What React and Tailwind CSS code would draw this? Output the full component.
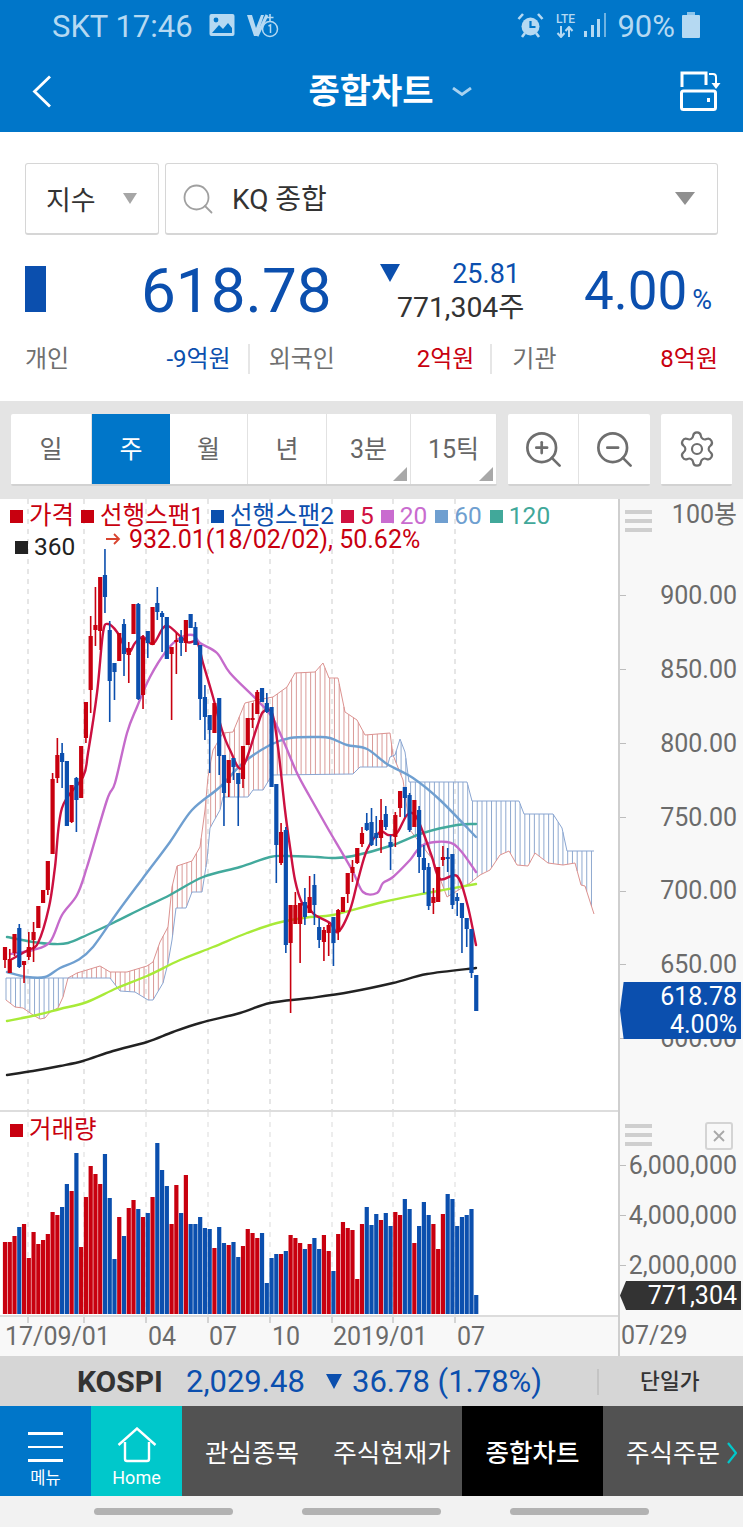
import React from "react";
import { Search, ZoomIn, ZoomOut, Settings } from "lucide-react";

const RED = "#c8000f";
const BLUE = "#0b4fae";

// x of the n-th weekly bar, same for candles and volume
const barX = (i) => 5 + 4.76 * i;

// [up, wickTop, bodyTop, bodyBottom, wickBottom], page y coordinates
const candles = [
  [1, 947, 947, 960, 968], [1, 949, 959, 973, 973], [1, 934, 934, 953, 956], [0, 924, 928, 967, 968],
  [1, 961, 961, 965, 983], [1, 932, 947, 957, 960], [1, 922, 932, 940, 962], [1, 906, 906, 928, 928],
  [1, 890, 890, 903, 903], [1, 861, 861, 890, 895], [1, 773, 779, 854, 854], [1, 738, 755, 778, 783],
  [0, 743, 753, 762, 788], [0, 761, 761, 826, 826], [1, 785, 785, 822, 823], [0, 777, 778, 800, 832],
  [1, 746, 746, 798, 798], [1, 702, 702, 738, 743], [1, 616, 636, 690, 713], [1, 587, 625, 630, 646],
  [1, 577, 577, 631, 650], [0, 549, 575, 597, 613], [0, 621, 630, 681, 722], [0, 663, 663, 672, 700],
  [1, 633, 633, 661, 661], [0, 619, 624, 654, 676], [1, 642, 648, 655, 683], [1, 604, 604, 634, 634],
  [0, 603, 604, 699, 700], [1, 635, 638, 695, 709], [0, 631, 631, 643, 658], [1, 607, 607, 645, 645],
  [0, 587, 603, 612, 620], [0, 611, 613, 617, 652], [0, 617, 617, 659, 659], [1, 647, 647, 654, 720],
  [1, 633, 640, 642, 674], [0, 630, 637, 643, 656], [1, 620, 620, 643, 652], [0, 614, 614, 628, 628],
  [0, 622, 627, 645, 645], [0, 645, 645, 699, 720], [0, 685, 697, 717, 740], [0, 715, 715, 730, 773],
  [1, 703, 703, 733, 733], [0, 698, 698, 756, 775], [0, 755, 755, 793, 826], [1, 760, 760, 783, 797],
  [0, 758, 758, 767, 780], [0, 773, 773, 784, 826], [1, 746, 746, 779, 788], [1, 718, 718, 745, 745],
  [1, 703, 718, 720, 728], [1, 690, 692, 714, 714], [0, 688, 688, 702, 702], [0, 693, 703, 712, 713],
  [0, 707, 707, 787, 787], [0, 784, 784, 845, 883], [1, 823, 832, 863, 865], [0, 827, 830, 945, 953],
  [1, 905, 905, 943, 1013], [1, 892, 905, 924, 924], [1, 903, 903, 924, 963], [0, 888, 902, 917, 925],
  [1, 876, 897, 913, 913], [0, 874, 885, 905, 925], [0, 918, 927, 940, 948], [1, 927, 930, 942, 961],
  [1, 923, 925, 933, 956], [0, 917, 917, 943, 966], [1, 909, 910, 932, 940], [1, 897, 897, 912, 912],
  [1, 873, 873, 894, 903], [1, 860, 867, 873, 882], [1, 848, 848, 863, 864], [1, 827, 833, 844, 847],
  [0, 813, 823, 830, 831], [0, 808, 822, 845, 846], [0, 816, 833, 838, 846], [1, 799, 820, 838, 853],
  [0, 806, 814, 827, 830], [0, 835, 842, 847, 870], [1, 812, 815, 837, 847], [1, 791, 791, 808, 817],
  [0, 787, 787, 798, 817], [0, 793, 795, 830, 832], [1, 800, 800, 827, 827], [0, 806, 810, 857, 873],
  [0, 845, 858, 870, 893], [0, 863, 867, 906, 910], [1, 888, 897, 903, 914], [1, 867, 867, 902, 902],
  [1, 846, 857, 860, 866], [0, 848, 857, 859, 872], [0, 854, 854, 905, 909], [0, 893, 897, 901, 916],
  [0, 903, 903, 918, 953], [0, 918, 918, 929, 947], [0, 929, 929, 973, 978], [0, 975, 975, 1011, 1011],
];

// [up, top of bar] in page y
const volume = [
  [1, 1242], [1, 1242], [1, 1236], [0, 1227], [1, 1224], [1, 1258], [1, 1232], [1, 1244], [1, 1240], [1, 1234],
  [1, 1212], [1, 1215], [0, 1207], [0, 1184], [1, 1191], [0, 1153], [1, 1247], [1, 1197], [1, 1166], [1, 1174],
  [1, 1184], [0, 1154], [0, 1198], [0, 1259], [1, 1217], [0, 1236], [1, 1208], [1, 1200], [0, 1209], [1, 1217],
  [0, 1213], [1, 1197], [0, 1143], [0, 1170], [0, 1186], [1, 1224], [1, 1185], [0, 1213], [1, 1175], [0, 1224],
  [0, 1224], [0, 1217], [0, 1228], [0, 1229], [1, 1248], [0, 1227], [0, 1243], [1, 1245], [0, 1242], [0, 1257],
  [1, 1246], [1, 1229], [1, 1233], [1, 1238], [0, 1233], [0, 1283], [0, 1258], [0, 1254], [1, 1254], [0, 1251],
  [1, 1235], [1, 1238], [1, 1243], [0, 1249], [1, 1244], [0, 1238], [0, 1249], [1, 1235], [1, 1251], [0, 1271],
  [1, 1234], [1, 1222], [1, 1228], [1, 1230], [1, 1279], [1, 1224], [0, 1207], [0, 1225], [0, 1214], [1, 1220],
  [0, 1213], [0, 1226], [1, 1212], [1, 1215], [0, 1199], [0, 1209], [1, 1243], [0, 1226], [0, 1202], [0, 1215],
  [1, 1224], [1, 1249], [1, 1214], [0, 1194], [0, 1199], [0, 1226], [0, 1217], [0, 1215], [0, 1209], [0, 1295],
];

const ma5 = [[12, 959], [28, 950], [38, 943], [49, 907], [55, 867], [62, 808], [83, 777], [88, 753], [97, 693], [103, 633], [108, 624], [117, 632], [128, 652], [135, 643], [143, 637], [153, 644], [163, 628], [170, 627], [187, 642], [197, 642], [203, 663], [213, 697], [222, 730], [230, 750], [242, 768], [257, 727], [263, 712], [272, 713], [278, 747], [285, 810], [290, 847], [295, 880], [302, 903], [308, 907], [315, 915], [330, 923], [338, 932], [350, 910], [358, 880], [367, 850], [380, 832], [388, 835], [397, 833], [407, 815], [415, 815], [423, 832], [432, 857], [440, 879], [457, 876], [467, 903], [476, 945]];
const ma20 = [[10, 954], [33, 950], [50, 942], [62, 915], [77, 895], [87, 867], [107, 800], [115, 783], [127, 733], [137, 707], [150, 677], [167, 650], [180, 638], [193, 635], [200, 643], [217, 653], [230, 673], [257, 700], [272, 717], [283, 740], [297, 773], [310, 797], [327, 827], [352, 870], [363, 892], [377, 893], [383, 883], [393, 877], [410, 860], [423, 845], [447, 842], [460, 850], [476, 872]];
const ma60 = [[7, 972], [27, 977], [45, 977], [60, 968], [78, 960], [93, 947], [117, 913], [143, 878], [170, 842], [192, 810], [220, 787], [243, 763], [270, 745], [290, 738], [317, 737], [330, 738], [347, 745], [367, 749], [387, 764], [413, 778], [440, 800], [476, 837]];
const ma120 = [[7, 937], [33, 942], [53, 944], [68, 943], [87, 935], [113, 923], [143, 908], [170, 895], [203, 877], [240, 867], [270, 857], [287, 856], [317, 857], [333, 858], [353, 856], [390, 846], [423, 833], [457, 825], [476, 824]];
const ma240 = [[7, 1021], [37, 1015], [60, 1009], [87, 1002], [117, 988], [147, 976], [180, 960], [213, 947], [247, 933], [277, 923], [310, 917], [333, 915], [383, 902], [427, 893], [476, 884]];
const ma360 = [[7, 1075], [33, 1071], [60, 1066], [83, 1061], [113, 1051], [147, 1042], [173, 1032], [200, 1023], [240, 1013], [270, 1003], [310, 998], [350, 992], [393, 983], [427, 974], [476, 968]];

const spanA = [[6, 1000], [15, 1007], [23, 1008], [33, 1015], [40, 1019], [45, 1018], [50, 1012], [58, 1008], [63, 997], [68, 978], [77, 973], [100, 966], [110, 972], [127, 972], [147, 966], [153, 962], [160, 942], [168, 927], [172, 887], [177, 866], [192, 861], [200, 847], [205, 810], [208, 777], [213, 750], [223, 733], [233, 732], [245, 703], [257, 700], [273, 697], [287, 687], [295, 673], [315, 672], [323, 663], [329, 678], [338, 678], [345, 712], [357, 720], [365, 735], [390, 733], [393, 755], [403, 780], [410, 830], [433, 860], [447, 897], [470, 883], [480, 875], [490, 870], [500, 855], [509, 851], [517, 865], [528, 866], [535, 853], [548, 863], [563, 865], [575, 863], [581, 885], [585, 886], [594, 914]];
const spanB = [[6, 978], [110, 978], [120, 991], [135, 992], [148, 1000], [153, 1000], [163, 983], [168, 963], [172, 940], [176, 908], [186, 908], [192, 892], [202, 892], [207, 860], [210, 828], [220, 810], [223, 797], [248, 797], [253, 790], [263, 790], [272, 775], [353, 774], [360, 767], [387, 767], [390, 757], [395, 755], [400, 739], [405, 752], [409, 782], [467, 782], [472, 801], [519, 801], [524, 814], [553, 814], [562, 828], [567, 851], [594, 851]];

const gridX = [28, 84, 146, 208, 270, 332, 393, 455];

const toPath = (pts) => "M" + pts.map((p) => p.join(" ")).join("L");

// catmull-rom through the points so the moving averages don't look angular
const smooth = (pts) => {
  let d = `M${pts[0][0]} ${pts[0][1]}`;
  for (let i = 0; i < pts.length - 1; i++) {
    const p0 = pts[i - 1] || pts[i];
    const p1 = pts[i];
    const p2 = pts[i + 1];
    const p3 = pts[i + 2] || p2;
    const c1x = p1[0] + (p2[0] - p0[0]) / 6;
    const c1y = p1[1] + (p2[1] - p0[1]) / 6;
    const c2x = p2[0] - (p3[0] - p1[0]) / 6;
    const c2y = p2[1] - (p3[1] - p1[1]) / 6;
    d += `C${c1x} ${c1y} ${c2x} ${c2y} ${p2[0]} ${p2[1]}`;
  }
  return d;
};

const yAt = (pts, x) => {
  for (let i = 1; i < pts.length; i++) {
    if (x <= pts[i][0]) {
      const [x0, y0] = pts[i - 1];
      const [x1, y1] = pts[i];
      return y0 + ((y1 - y0) * (x - x0)) / (x1 - x0);
    }
  }
  return pts[pts.length - 1][1];
};

const hatchX = Array.from({ length: 125 }, (_, i) => 6 + 4.76 * i).filter((x) => x <= 594);

const PriceChart = () => (
  <svg viewBox="0 499 618 611" className="block w-[618px] h-[611px]">
    {gridX.map((x) => (
      <line key={x} x1={x} x2={x} y1="499" y2="1110" stroke="#dedede" strokeWidth="1.5" strokeDasharray="5 5" />
    ))}
    {hatchX.map((x) => {
      const a = yAt(spanA, x);
      const b = yAt(spanB, x);
      return <line key={x} x1={x} x2={x} y1={a} y2={b} stroke={a < b ? "#d99a98" : "#8fa9cf"} strokeWidth="1" />;
    })}
    <path d={toPath(spanA)} fill="none" stroke="#dc9290" strokeWidth="1" />
    <path d={toPath(spanB)} fill="none" stroke="#8aa6d2" strokeWidth="1" />
    <g fill="none" strokeWidth="2.4" strokeLinejoin="round" strokeLinecap="round">
      <path d={smooth(ma360)} stroke="#222222" />
      <path d={smooth(ma240)} stroke="#a8ea38" />
      <path d={smooth(ma120)} stroke="#42a99c" />
      <path d={smooth(ma60)} stroke="#6f9fd0" />
      <path d={smooth(ma20)} stroke="#c56bcb" />
      <path d={smooth(ma5)} stroke="#cc1040" />
    </g>
    {candles.map(([up, wt, bt, bb, wb], i) => {
      const x = barX(i);
      const c = up ? RED : BLUE;
      return (
        <g key={i}>
          <line x1={x} x2={x} y1={wt} y2={wb} stroke={c} strokeWidth="1.6" />
          <rect x={x - 2.1} y={bt} width="4.2" height={Math.max(bb - bt, 1.5)} fill={c} />
        </g>
      );
    })}
  </svg>
);

const VolumeChart = () => (
  <svg viewBox="0 1112 618 203" className="block w-[618px] h-[203px]">
    {gridX.map((x) => (
      <line key={x} x1={x} x2={x} y1="1112" y2="1315" stroke="#e2e2e2" strokeWidth="1.2" strokeDasharray="5 5" />
    ))}
    {volume.map(([up, top], i) => (
      <rect key={i} x={barX(i) - 2.1} y={top} width="4.2" height={1314 - top} fill={up ? RED : BLUE} />
    ))}
  </svg>
);

const Legend = ({ color, label }) => (
  <span className="flex items-center gap-[6px]">
    <span className="w-[13px] h-[13px]" style={{ background: color }} />
    <span style={{ color }}>{label}</span>
  </span>
);

const Burger = () => (
  <div className="flex flex-col gap-[5px] w-[27px]">
    <div className="h-[4px] bg-[#cfcfcf]" />
    <div className="h-[4px] bg-[#cfcfcf]" />
    <div className="h-[4px] bg-[#cfcfcf]" />
  </div>
);

const PriceTick = ({ value }) => (
  <div className="h-[73.8px] flex items-center justify-between pr-[6px]">
    <div className="w-[6px] h-px bg-[#bdbdbd]" />
    <span>{value}</span>
  </div>
);

const VolumeTick = ({ value }) => (
  <div className="h-[50px] flex items-center justify-between pr-[6px]">
    <div className="w-[6px] h-px bg-[#bdbdbd]" />
    <span>{value}</span>
  </div>
);

const StatusBar = () => (
  <div className="h-[50px] flex items-center justify-between pl-[52px] pr-[43px] text-[#b5d9f2] text-[31px] leading-none">
    <div className="flex items-center">
      <span className="mt-[2px]">SKT 17:46</span>
      <svg width="26" height="24" viewBox="0 0 26 24" className="ml-[16px]">
        <rect x="0.5" y="1" width="25" height="22" rx="2" fill="#b5d9f2" />
        <circle cx="7" cy="7" r="2.4" fill="#0076c9" />
        <path d="M3 20l7-8 4 4 5-6 4 5v5z" fill="#0076c9" />
      </svg>
      <svg width="33" height="26" viewBox="0 0 33 26" className="ml-[11px]">
        <path d="M1 3h5l4 13L15 3h3l-7 21H8z" fill="#b5d9f2" />
        <path d="M11 24L21 3" stroke="#b5d9f2" strokeWidth="3" />
        <path d="M24 2v7M20.500 5.500h7" stroke="#b5d9f2" strokeWidth="1.6" />
        <circle cx="24" cy="17" r="7.500" fill="#0076c9" stroke="#b5d9f2" strokeWidth="1.500" />
        <path d="M22.500 14l2-1v8" fill="none" stroke="#b5d9f2" strokeWidth="1.500" />
      </svg>
    </div>
    <div className="flex items-center">
      <svg width="27" height="27" viewBox="0 0 27 27">
        <circle cx="13.500" cy="14.500" r="9" fill="#b5d9f2" />
        <path d="M13.500 9v6h5" fill="none" stroke="#0076c9" strokeWidth="2.200" />
        <path d="M1.500 7L6 2M25.500 7L21 2M5 25l3-4M22 25l-3-4" stroke="#b5d9f2" strokeWidth="2.600" />
      </svg>
      <div className="ml-[9px] w-[24px] flex flex-col items-center">
        <span className="text-[12px] leading-[13px] font-medium">LTE</span>
        <svg width="20" height="12" viewBox="0 0 20 12">
          <path d="M6 0v10M2.500 7L6 11l3.500-4M14 11V1M10.500 5L14 1l3.500 4" fill="none" stroke="#b5d9f2" strokeWidth="2" />
        </svg>
      </div>
      <svg width="23" height="24" viewBox="0 0 23 24" className="ml-[7px]">
        <rect x="0" y="18" width="3" height="6" fill="#b5d9f2" />
        <rect x="7" y="12" width="3" height="12" fill="#b5d9f2" />
        <rect x="13" y="6" width="3" height="18" fill="#b5d9f2" />
        <rect x="20" y="0" width="2" height="24" fill="#6fb3e2" />
      </svg>
      <span className="ml-[10px] mt-[2px]">90%</span>
      <svg width="18" height="26" viewBox="0 0 18 26" className="ml-[7px]">
        <rect x="5" y="0" width="8" height="3" fill="#8cc4ea" />
        <rect x="0" y="3" width="18" height="23" rx="1" fill="#b5d9f2" />
      </svg>
    </div>
  </div>
);

const TitleBar = () => (
  <div className="h-[82px] flex items-center justify-between pl-[32px] pr-[22px]">
    <svg width="20" height="33" viewBox="0 0 20 33">
      <path d="M18 1.500L2.500 16.500 18 31.500" fill="none" stroke="#ffffff" strokeWidth="2.800" />
    </svg>
    <div className="flex items-center ml-[48px]">
      <span className="text-white text-[34px] font-bold leading-none">종합차트</span>
      <svg width="20" height="9" viewBox="0 0 20 9" className="ml-[18px]">
        <path d="M1 1l9 6.500L19 1" fill="none" stroke="#a8d2f0" strokeWidth="2.800" />
      </svg>
    </div>
    <svg width="41" height="40" viewBox="0 0 41 40">
      <path d="M2 16V2h24v12" fill="none" stroke="#ffffff" strokeWidth="3" />
      <path d="M29 3h4a3 3 0 0 1 3 3v7" fill="none" stroke="#ffffff" strokeWidth="2" />
      <path d="M31.500 12h9L36 18z" fill="#ffffff" />
      <rect x="1.500" y="20" width="34" height="18.500" rx="2" fill="none" stroke="#ffffff" strokeWidth="3" />
      <rect x="27" y="27" width="3" height="4" fill="#ffffff" />
    </svg>
  </div>
);

const SymbolRow = () => (
  <div className="flex gap-[6px] h-[72px] px-[25px]">
    <div className="w-[134px] flex items-center border border-[#d6d6d6] border-b-2 rounded-[3px] pl-[20px]">
      <span className="text-[27px] text-[#333333] pt-[6px]">지수</span>
      <div className="ml-[27px] w-0 h-0 border-x-[7px] border-x-transparent border-t-[11px] border-t-[#a6a6a6]" />
    </div>
    <div className="flex-1 flex items-center border border-[#d6d6d6] border-b-2 rounded-[3px] pl-[14px] pr-[22px]">
      <Search size={36} strokeWidth={1.2} color="#a0a0a0" />
      <span className="ml-[16px] text-[28px] text-[#333333] pt-[3px]">KQ 종합</span>
      <div className="ml-auto w-0 h-0 border-x-[10px] border-x-transparent border-t-[13px] border-t-[#8f8f8f]" />
    </div>
  </div>
);

const PriceRow = () => (
  <div className="flex items-center h-[60px] mt-[26px] px-[25px] text-[#0b4fae]">
    <div className="w-[21px] h-[46px] bg-[#0b4fae] self-start mt-[5px]" />
    <span className="ml-[95px] w-[239px] text-[62px] leading-none">618.78</span>
    <div className="w-0 h-0 self-start mt-[3px] border-x-[10px] border-x-transparent border-t-[18px] border-t-[#0b4fae]" />
    <div className="-ml-[3px] w-[127px] shrink-0 text-right text-[28.4px] leading-[33px] whitespace-nowrap">
      <div className="pr-[4px] text-[27px]">25.81</div>
      <div className="text-[#333333]">771,304주</div>
    </div>
    <div className="ml-[60px] flex items-baseline">
      <span className="text-[53px] leading-none">4.00</span>
      <span className="ml-[5px] text-[27px] leading-none">%</span>
    </div>
  </div>
);

const InvestorCell = ({ name, value, color }) => (
  <div className="w-[206px] flex justify-between">
    <span className="text-[#707070]">{name}</span>
    <span style={{ color }}>{value}</span>
  </div>
);

const InvestorRow = () => (
  <div className="flex items-center h-[30px] mt-[23px] px-[25px] text-[24px] leading-none">
    <InvestorCell name="개인" value="-9억원" color={BLUE} />
    <div className="w-[2px] h-[30px] bg-[#e6e6e6] ml-[17px] mr-[19px]" />
    <InvestorCell name="외국인" value="2억원" color={RED} />
    <div className="w-[2px] h-[30px] bg-[#e6e6e6] ml-[16px] mr-[20px]" />
    <InvestorCell name="기관" value="8억원" color={RED} />
  </div>
);

const Corner = () => (
  <div className="absolute right-[3px] bottom-[3px] w-0 h-0 border-l-[14px] border-l-transparent border-b-[14px] border-b-[#a8a8a8]" />
);

const PeriodButton = ({ label, width, active, corner }) => (
  <div
    className={
      active
        ? "relative h-full flex items-center justify-center pt-[2px] bg-[#0076c9] text-white"
        : "relative h-full flex items-center justify-center pt-[2px] border-r border-[#e2e2e2] text-[#666666]"
    }
    style={{ width }}
  >
    {label}
    {corner && <Corner />}
  </div>
);

const Toolbar = () => (
  <div className="h-[98px] bg-[#e4e4e4] pt-[13px] pl-[11px] flex text-[25px]">
    <div className="flex h-[72px] w-[486px] bg-white border-b-2 border-[#d2d2d2] rounded-[2px]">
      <PeriodButton label="일" width="81px" />
      <PeriodButton label="주" width="78px" active />
      <PeriodButton label="월" width="78px" />
      <PeriodButton label="년" width="79px" />
      <PeriodButton label="3분" width="84px" corner />
      <PeriodButton label="15틱" width="86px" corner />
    </div>
    <div className="flex h-[72px] w-[142px] ml-[11px] bg-white border-b-2 border-[#d2d2d2] rounded-[2px]">
      <div className="w-[71px] flex items-center justify-center border-r border-[#e2e2e2]">
        <ZoomIn size={43} strokeWidth={1.5} color="#6e6e6e" />
      </div>
      <div className="w-[71px] flex items-center justify-center">
        <ZoomOut size={43} strokeWidth={1.5} color="#6e6e6e" />
      </div>
    </div>
    <div className="flex items-center justify-center h-[72px] w-[71px] ml-[11px] bg-white border-b-2 border-[#d2d2d2] rounded-[2px]">
      <Settings size={40} strokeWidth={1.3} color="#6e6e6e" />
    </div>
  </div>
);

const ChartArea = () => (
  <div className="flex h-[857px] bg-[#f8f8f8] text-[25px] text-[#6b6b6b]">
    <div className="w-[618px]">
      <div className="relative h-[611px] bg-white">
        <PriceChart />
        <div className="absolute left-[10px] top-0 text-[24.5px] leading-none">
          <div className="flex items-center gap-[7px] h-[34px] whitespace-nowrap">
            <Legend color={RED} label="가격" />
            <Legend color={RED} label="선행스팬1" />
            <Legend color={BLUE} label="선행스팬2" />
            <Legend color="#d0103f" label="5" />
            <Legend color="#c96ccf" label="20" />
            <span className="ml-[1px]">
              <Legend color="#6f9fd0" label="60" />
            </span>
            <span className="ml-[1px]">
              <Legend color="#41a89a" label="120" />
            </span>
          </div>
          <div className="flex h-[34px]">
            <div className="ml-[5px] w-[90px] pt-[2px]">
              <Legend color="#222222" label="360" />
            </div>
            <span className="flex items-center h-[24px] -mt-[6px] text-[#c8000f] text-[25px] whitespace-nowrap">
              <svg width="16" height="14" viewBox="0 0 16 14">
                <path d="M1 7h13M9 2l5 5-5 5" fill="none" stroke="#d8442f" strokeWidth="1.800" />
              </svg>
              <span className="ml-[8px]">932.01(18/02/02), 50.62%</span>
            </span>
          </div>
        </div>
      </div>
      <div className="h-[2px] bg-[#dddddd]" />
      <div className="relative h-[203px] bg-white">
        <VolumeChart />
        <div className="absolute left-[10px] top-[6px] text-[24.5px] leading-none">
          <Legend color={RED} label="거래량" />
        </div>
      </div>
      <div className="h-[2px] bg-[#dcdcdc]" />
      <svg viewBox="0 0 618 6" className="block w-[618px] h-[6px]">
        {gridX.map((x) => (
          <line key={x} x1={x} x2={x} y1="0" y2="6" stroke="#bdbdbd" strokeWidth="1.200" />
        ))}
      </svg>
      <div className="flex items-center h-[26px] leading-none">
        <span className="w-[148px] pl-[5px]">17/09/01</span>
        <span className="w-[61px]">04</span>
        <span className="w-[63px]">07</span>
        <span className="w-[61px]">10</span>
        <span className="w-[124px]">2019/01</span>
        <span>07</span>
      </div>
    </div>
    <div className="relative w-[125px] border-l-2 border-[#cfcfcf]">
      <div className="h-[60px] flex items-start justify-between pl-[5px] pr-[6px]">
        <div className="mt-[11px]">
          <Burger />
        </div>
        <span className="leading-[31px]">100봉</span>
      </div>
      <PriceTick value="900.00" />
      <PriceTick value="850.00" />
      <PriceTick value="800.00" />
      <PriceTick value="750.00" />
      <PriceTick value="700.00" />
      <PriceTick value="650.00" />
      <PriceTick value="600.00" />
      <div className="absolute right-[2px] top-[483px] w-[121px] h-[57px] bg-[#0b4fae] text-white text-right pr-[4px] pt-[1px] leading-[28px] [clip-path:polygon(3%_0,100%_0,100%_100%,3%_100%,0_50%)]">
        <div>618.78</div>
        <div>4.00%</div>
      </div>
      <div className="mt-[36.400px] h-[29px] flex items-start justify-between pl-[5px] pr-[10px] pt-[10px]">
        <div className="mt-[2px]">
          <Burger />
        </div>
        <div className="w-[28px] h-[28px] border-2 border-[#d4d4d4] rounded-[3px] flex items-center justify-center">
          <svg width="12" height="12" viewBox="0 0 12 12">
            <path d="M1 1l10 10M11 1L1 11" stroke="#a8a8a8" strokeWidth="1.800" />
          </svg>
        </div>
      </div>
      <VolumeTick value="6,000,000" />
      <VolumeTick value="4,000,000" />
      <VolumeTick value="2,000,000" />
      <div className="absolute right-[2px] top-[782px] w-[121px] h-[29px] bg-[#333333] text-white text-right pr-[4px] leading-[29px] [clip-path:polygon(5%_0,100%_0,100%_100%,5%_100%,0_50%)]">
        771,304
      </div>
      <div className="mt-[25px] pl-[1px] h-[40px] flex items-center leading-none">07/29</div>
    </div>
  </div>
);

const KospiBar = () => (
  <div className="h-[50px] bg-[#d6d6d6] flex items-center pt-[1px] text-[#0b4fae] text-[31px] leading-none">
    <span className="ml-[77px] w-[109px] font-bold text-[#333333] text-[30px]">KOSPI</span>
    <span className="w-[140px]">2,029.48</span>
    <div className="w-0 h-0 border-x-[8.500px] border-x-transparent border-t-[15px] border-t-[#0b4fae]" />
    <span className="ml-[10px]">36.78 (1.78%)</span>
    <div className="ml-[55px] w-[2px] h-[26px] bg-[#c4c4c4]" />
    <span className="ml-[41px] text-[21.500px] font-medium text-[#333333]">단일가</span>
  </div>
);

const NavBar = () => (
  <div className="h-[90px] flex bg-[#525252] text-white text-[25.500px]">
    <div className="w-[91px] bg-[#0076c9] flex flex-col items-center pt-[26px]">
      <div className="w-[35px] h-[2.500px] bg-white" />
      <div className="w-[35px] h-[2.500px] bg-white mt-[11px]" />
      <div className="w-[35px] h-[2.500px] bg-white mt-[11px]" />
      <span className="mt-[8px] text-[16.500px] leading-[18px]">메뉴</span>
    </div>
    <div className="w-[91px] bg-[#00c8cb] flex flex-col items-center pt-[21px]">
      <svg width="40" height="36" viewBox="0 0 40 36">
        <path d="M1.500 18L20 1.500 38.500 18M8 15v17a2 2 0 0 0 2 2h20a2 2 0 0 0 2-2V15" fill="none" stroke="#ffffff" strokeWidth="2.400" />
      </svg>
      <span className="mt-[4px] text-[18px] leading-[22px]">Home</span>
    </div>
    <div className="w-[134px] flex items-center justify-center pl-[6px] pt-[4px]">관심종목</div>
    <div className="w-[146px] flex items-center justify-center pl-[6px] pt-[4px]">주식현재가</div>
    <div className="w-[141px] bg-black flex items-center justify-center pt-[4px] font-medium">종합차트</div>
    <div className="flex-1 flex items-center pl-[23px] pt-[4px]">
      <span className="whitespace-nowrap">주식주문</span>
      <svg width="10" height="22" viewBox="0 0 10 22" className="ml-[7px] shrink-0">
        <path d="M1 1l8 10-8 10" fill="none" stroke="#00c8cb" strokeWidth="2.200" />
      </svg>
    </div>
  </div>
);

const GestureBar = () => (
  <div className="h-[31px] bg-[#f2f2f2] flex pt-[12px] pl-[94px] gap-[69px]">
    <div className="w-[139px] h-[7px] rounded-full bg-[#b2b2b2]" />
    <div className="w-[139px] h-[7px] rounded-full bg-[#b2b2b2]" />
    <div className="w-[139px] h-[7px] rounded-full bg-[#b2b2b2]" />
  </div>
);

export default function App() {
  return (
    <div className="w-[743px] h-[1527px] overflow-hidden bg-white font-['Roboto','Noto_Sans_CJK_KR',sans-serif]">
      <div className="bg-[#0076c9]">
        <StatusBar />
        <TitleBar />
      </div>
      <div className="h-[269px] pt-[31px]">
        <SymbolRow />
        <PriceRow />
        <InvestorRow />
      </div>
      <Toolbar />
      <ChartArea />
      <KospiBar />
      <NavBar />
      <GestureBar />
    </div>
  );
}
